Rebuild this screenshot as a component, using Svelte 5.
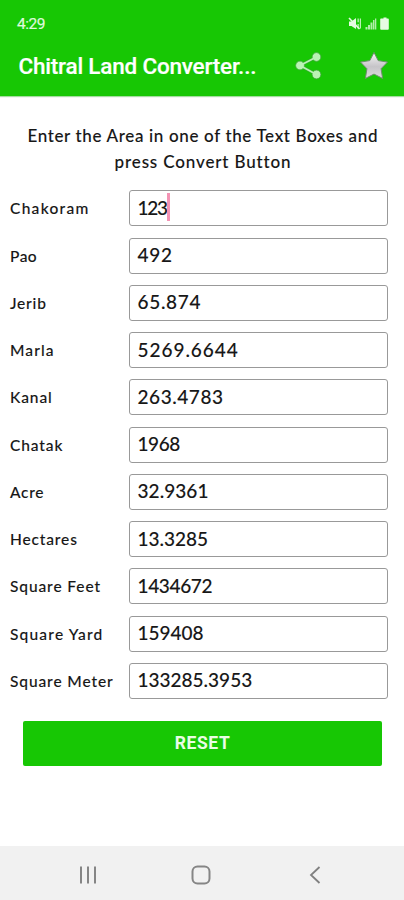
<script lang="ts">
  type Row = {
    label: string;
    value: string;
    labelGap: number;
    valueGap: number;
  };

  const rows: Row[] = [
    { label: 'Chakoram', value: '123', labelGap: 1.3, valueGap: -1.3 },
    { label: 'Pao', value: '492', labelGap: 0.5, valueGap: 0.7 },
    { label: 'Jerib', value: '65.874', labelGap: 0.8, valueGap: 0.7 },
    { label: 'Marla', value: '5269.6644', labelGap: 1.1, valueGap: 0.95 },
    { label: 'Kanal', value: '263.4783', labelGap: 0.9, valueGap: 0.55 },
    { label: 'Chatak', value: '1968', labelGap: 0.9, valueGap: -0.4 },
    { label: 'Acre', value: '32.9361', labelGap: 0.7, valueGap: 0.05 },
    { label: 'Hectares', value: '13.3285', labelGap: 0.85, valueGap: 0 },
    { label: 'Square Feet', value: '1434672', labelGap: 0.9, valueGap: -0.35 },
    { label: 'Square Yard', value: '159408', labelGap: 1.2, valueGap: 0 },
    { label: 'Square Meter', value: '133285.3953', labelGap: 0.9, valueGap: 0 }
  ];

  let active = $state(0);
</script>

<div class="screen">
  <header>
    <div class="status">
      <span class="clock">4:29</span>
      <svg width="42" height="14" viewBox="0 0 42 14" fill="#e6fbe3">
        <path d="M1 4.5h2.5L8 1v11L3.5 9H1z" />
        <path d="M9.5 1.5h1.3v3.8H9.5zM9.5 7h1.3v4.5H9.5zM11.8 1.5H13v10h-1.2z" opacity=".8" />
        <path d="M1 1l10.5 11" stroke="#e6fbe3" stroke-width="1.6" />
        <path d="M17.5 10h2v2.5h-2zM20 8h2v4.500h-2zM22.500 5.500h2v7h-2zM25 3h1.500v9.500h-1.500zM27 1.500h1.300v11H27z" opacity=".75" />
        <path d="M33 1.500h2.500V.500h3v1H40q.8 0 .8.800v9.500q0 .9-.9.900h-6.800q-.9 0-.9-.9v-9.500q0-.8.800-.8z" />
      </svg>
    </div>
    <div class="bar">
      <h1>Chitral Land Converter...</h1>
      <svg class="share" width="28" height="30" viewBox="0 0 28 30">
        <g fill="#b9f3b4" stroke="#3ba636" stroke-width=".8">
          <path d="M21.5 6L5 14.5l16.500 9" fill="none" stroke="#3ba636" stroke-width="3" />
          <circle cx="21.5" cy="6" r="4.4" />
          <circle cx="5" cy="14.5" r="4.4" />
          <circle cx="21.5" cy="23.5" r="4.4" />
        </g>
        <path d="M21.5 6L5 14.5l16.500 9" fill="none" stroke="#b9f3b4" stroke-width="1.7" />
      </svg>
      <svg class="star" width="30" height="30" viewBox="0 0 30 30">
        <defs>
          <linearGradient id="silver" x1="0" y1="0" x2="0" y2="1">
            <stop offset="0" stop-color="#f5f5f5" />
            <stop offset=".55" stop-color="#c6c4c8" />
            <stop offset="1" stop-color="#dedede" />
          </linearGradient>
        </defs>
        <path
          d="M15 1.500l4.200 8.100 9.300 1.500-6.400 6.600 1.500 9.700-8.600-4.300-8.600 4.300 1.500-9.700-6.400-6.600 9.300-1.500z"
          fill="url(#silver)"
          stroke="#6d8f6b"
          stroke-width="1"
          stroke-linejoin="round"
        />
      </svg>
    </div>
  </header>

  <main>
    <p class="intro">
      <span class="first">Enter the Area in one of the Text Boxes and</span><br />
      <span class="second">press Convert Button</span>
    </p>

    <div class="rows">
      {#each rows as row, i}
        <div class="row">
          <span class="label"><span style="letter-spacing: {row.labelGap}px">{row.label}</span></span>
          <div class="field">
            <span style="letter-spacing: {row.valueGap}px">{row.value}</span>
            {#if i === active}<i class="caret"></i>{/if}
          </div>
        </div>
      {/each}
    </div>

    <button>RESET</button>
  </main>

  <nav>
    <svg width="20" height="20" viewBox="0 0 20 20" stroke="#858585" stroke-width="2">
      <path d="M3 1.5v17M10 1.5v17M17 1.5v17" />
    </svg>
    <svg width="20" height="20" viewBox="0 0 20 20" fill="none" stroke="#858585" stroke-width="2">
      <rect x="1.5" y="1.5" width="17" height="17" rx="5" />
    </svg>
    <svg width="20" height="20" viewBox="0 0 20 20" fill="none" stroke="#808080" stroke-width="1.8">
      <path d="M14.5 2L6 10l8.500 8" />
    </svg>
  </nav>
</div>

<style>
  :global(body) {
    background: #fff;
  }

  .screen {
    display: flex;
    flex-direction: column;
    width: 404px;
    height: 900px;
    box-sizing: border-box;
    overflow: hidden;
    color: #171717;
    font-family: Lato, sans-serif;
  }

  header {
    height: 96px;
    flex: none;
    background: #17c704;
    box-shadow: 0 1px 1px #a5dca0;
    font-family: Roboto, sans-serif;
    color: #fff;
  }

  .status {
    display: flex;
    justify-content: space-between;
    align-items: center;
    height: 36px;
    padding: 12px 14px 0 17px;
    box-sizing: border-box;
  }

  .clock {
    font-size: 15.5px;
    letter-spacing: -0.5px;
    color: #dffadb;
    -webkit-text-stroke: 0.2px;
  }

  .bar {
    display: flex;
    align-items: center;
    height: 60px;
    padding-left: 18.5px;
  }

  h1 {
    flex: none;
    width: 276.5px;
    margin: 0;
    font-size: 22.5px;
    font-weight: 500;
    letter-spacing: -0.2px;
    white-space: nowrap;
    -webkit-text-stroke: 0.2px;
  }

  .star {
    margin-left: 35.5px;
  }

  main {
    flex: 1;
    display: flex;
    flex-direction: column;
  }

  .intro {
    margin: 26.5px 0 0;
    text-align: center;
    font-size: 17px;
    font-weight: 500;
    line-height: 26px;
    white-space: nowrap;
    -webkit-text-stroke: 0.1px;
  }

  .first {
    letter-spacing: 0.65px;
    padding-left: 1.5px;
  }

  .second {
    letter-spacing: 0.85px;
    padding-left: 2px;
  }

  .rows {
    display: grid;
    grid-auto-rows: 36px;
    row-gap: 11.25px;
    margin-top: 15.9px;
  }

  .row {
    display: grid;
    grid-template-columns: 118.5px 259.5px;
    padding-left: 10px;
    white-space: nowrap;
  }

  .label {
    align-self: center;
    font-size: 15.5px;
    font-weight: 500;
    -webkit-text-stroke: 0.1px;
  }

  .field {
    display: flex;
    align-items: center;
    padding: 0 0 2px 8px;
    border: 1px solid #999;
    border-radius: 3px;
    box-sizing: border-box;
    font-size: 19px;
    font-weight: 500;
    -webkit-text-stroke: 0.1px;
  }

  .caret {
    width: 3px;
    height: 28px;
    background: #f493b4;
  }

  button {
    width: 359px;
    height: 45px;
    margin: 22px 0 0 23px;
    padding: 0 0 1px;
    border: 0;
    border-radius: 2px;
    background: #17c704;
    color: #e9fde6;
    font: 700 17.5px Roboto, sans-serif;
    letter-spacing: 0.6px;
  }

  nav {
    display: flex;
    align-items: center;
    gap: 93.5px;
    height: 54px;
    flex: none;
    box-sizing: border-box;
    padding: 4px 0 0 77.5px;
    background: #f1f1f1;
  }
</style>
